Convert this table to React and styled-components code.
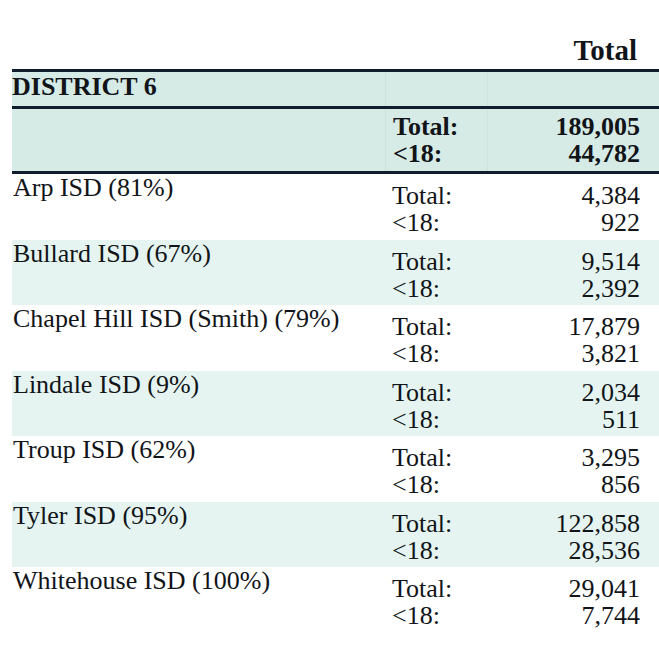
import React from "react";
import styled, { createGlobalStyle } from "styled-components";

const GlobalStyle = createGlobalStyle`
  html, body {
    margin: 0;
    padding: 0;
    background: #ffffff;
  }
  body {
    font-family: "Liberation Serif", "Times New Roman", serif;
    color: #111418;
  }
`;

const Page = styled.div`
  width: 659px;
  height: 667px;
  overflow: hidden;
  padding: 35px 0 0 12px;
  box-sizing: border-box;
`;

const HeadRow = styled.div`
  display: grid;
  grid-template-columns: 373px 102px 1fr;
  height: 34px;
  align-items: end;
`;

const HeadCell = styled.div`
  grid-column: 3;
  text-align: right;
  padding: 0 22px 9px 0;
  font-size: 29px;
  font-weight: 700;
  line-height: 30px;
`;

const Table = styled.div`
  border-top: 3px solid #0f1d2c;
`;

const Row = styled.div`
  display: grid;
  grid-template-columns: 373px 102px 1fr;
  background: ${({ shade }) =>
    shade === "head" ? "#d6ebe6" : shade === "band" ? "#e5f4f1" : "#ffffff"};
  border-bottom: ${({ rule }) => (rule ? "3px solid #0f1d2c" : "none")};
  height: ${({ h }) => h}px;
  box-sizing: border-box;
  font-weight: ${({ bold }) => (bold ? 700 : 400)};
`;

const Name = styled.div`
  font-size: 26px;
  line-height: 26px;
  padding: ${({ big }) => (big ? "2px 0 0 0" : "1px 0 0 1px")};
  white-space: nowrap;
`;

const Cell = styled.div`
  display: flex;
  flex-direction: column;
  font-size: 26px;
  line-height: 27px;
  padding-top: ${({ top }) => top}px;
  border-left: ${({ faint }) => (faint ? "1px solid #cfe3de" : "none")};
  text-align: ${({ right }) => (right ? "right" : "left")};
  padding-left: ${({ right }) => (right ? 0 : 7)}px;
  padding-right: ${({ right }) => (right ? 19 : 0)}px;
  box-sizing: border-box;
  white-space: nowrap;
`;

const districts = [
  { name: "Arp ISD (81%)", total: "4,384", minors: "922" },
  { name: "Bullard ISD (67%)", total: "9,514", minors: "2,392" },
  { name: "Chapel Hill ISD (Smith) (79%)", total: "17,879", minors: "3,821" },
  { name: "Lindale ISD (9%)", total: "2,034", minors: "511" },
  { name: "Troup ISD (62%)", total: "3,295", minors: "856" },
  { name: "Tyler ISD (95%)", total: "122,858", minors: "28,536" },
  { name: "Whitehouse ISD (100%)", total: "29,041", minors: "7,744" },
];

export default function App() {
  return (
    <Page>
      <GlobalStyle />
      <HeadRow>
        <HeadCell>Total</HeadCell>
      </HeadRow>
      <Table>
        <Row shade="head" rule h={37} bold>
          <Name big>DISTRICT 6</Name>
          <Cell faint />
          <Cell faint />
        </Row>
        <Row shade="head" rule h={65} bold>
          <Name />
          <Cell faint top={4}>
            <span>Total:</span>
            <span>&lt;18:</span>
          </Cell>
          <Cell faint right top={4}>
            <span>189,005</span>
            <span>44,782</span>
          </Cell>
        </Row>
        {districts.map((d, i) => (
          <Row key={d.name} shade={i % 2 ? "band" : "plain"} h={65.5}>
            <Name>{d.name}</Name>
            <Cell top={8}>
              <span>Total:</span>
              <span>&lt;18:</span>
            </Cell>
            <Cell right top={8}>
              <span>{d.total}</span>
              <span>{d.minors}</span>
            </Cell>
          </Row>
        ))}
      </Table>
    </Page>
  );
}
